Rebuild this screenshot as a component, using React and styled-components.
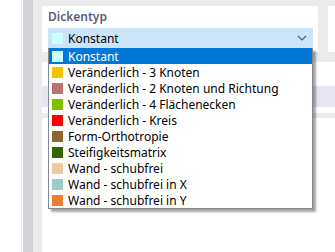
import React from 'react';
import styled, { createGlobalStyle } from 'styled-components';

const GlobalStyle = createGlobalStyle`
  html, body {
    margin: 0;
    padding: 0;
    background: #ffffff;
    font-family: "Noto Sans", "Open Sans", sans-serif;
  }
`;

const items = [
  { label: 'Konstant', color: '#ccffff' },
  { label: 'Veränderlich - 3 Knoten', color: '#f5c400' },
  { label: 'Veränderlich - 2 Knoten und Richtung', color: '#b97373' },
  { label: 'Veränderlich - 4 Flächenecken', color: '#7fbf00' },
  { label: 'Veränderlich - Kreis', color: '#ff0000' },
  { label: 'Form-Orthotropie', color: '#8f6630' },
  { label: 'Steifigkeitsmatrix', color: '#336600' },
  { label: 'Wand - schubfrei', color: '#efc8a2' },
  { label: 'Wand - schubfrei in X', color: '#99cccc' },
  { label: 'Wand - schubfrei in Y', color: '#ed7d31' },
];

const Page = styled.div`
  display: flex;
  width: 335px;
  height: 252px;
  overflow: hidden;
`;

const LeftWhite = styled.div`
  width: 21px;
  flex-shrink: 0;
  border-right: 1px solid #e4e4e4;
`;

const Rail = styled.div`
  width: 10px;
  flex-shrink: 0;
  margin-left: 1px;
  background: #d1d1d6;
`;

const Gutter = styled.div`
  width: 9px;
  flex-shrink: 0;
  background: #ebebeb;
`;

const Main = styled.div`
  flex: 1;
  display: flex;
  flex-direction: column;
`;

const TopRow = styled.div`
  display: flex;
  background: #ebebeb;
  padding-top: 6px;
  height: 46px;
`;

const Panel = styled.div`
  position: relative;
  width: 276px;
  background: #ffffff;
  padding: 3px 5px 0 6px;
  box-sizing: border-box;
`;

const SideGap = styled.div`
  width: 10px;
`;

const SideWhite = styled.div`
  flex: 1;
  background: #ffffff;
`;

const Band = styled.div`
  height: ${(p) => p.h}px;
  background: ${(p) => p.bg};
`;

const Label = styled.div`
  font-size: 12px;
  font-weight: 600;
  color: #5c5c7a;
  height: 16px;
  line-height: 16px;
  margin-bottom: 3px;
`;

const Combo = styled.div`
  display: flex;
  align-items: center;
  height: 20px;
  background: #cce4f7;
  padding: 0 6px 0 4px;
  font-size: 12px;
  color: #000;
`;

const Swatch = styled.span`
  width: 11px;
  height: 11px;
  flex-shrink: 0;
  background: ${(p) => p.color};
  margin-right: 5px;
`;

const ComboText = styled.span`
  flex: 1;
`;

const List = styled.div`
  position: absolute;
  left: 6px;
  top: 42px;
  width: 265px;
  box-sizing: border-box;
  background: #ffffff;
  border: 1px solid #828790;
  border-top: none;
  box-shadow: 3px 3px 2px rgba(0, 0, 0, 0.35);
  z-index: 2;
`;

const Item = styled.div`
  display: flex;
  align-items: center;
  height: 16px;
  padding-left: 3px;
  font-size: 12px;
  white-space: nowrap;
  color: ${(p) => (p.active ? '#ffffff' : '#000000')};
  background: ${(p) => (p.active ? '#0078d7' : 'transparent')};
`;

const Chevron = () => (
  <svg width="10" height="6" viewBox="0 0 10 6">
    <path d="M1 1 L5 5 L9 1" fill="none" stroke="#555" strokeWidth="1.1" />
  </svg>
);

export default function App() {
  return (
    <>
      <GlobalStyle />
      <Page>
        <LeftWhite />
        <Rail />
        <Gutter />
        <Main>
          <TopRow>
            <Panel>
              <Label>Dickentyp</Label>
              <Combo>
                <Swatch color={items[0].color} />
                <ComboText>Konstant</ComboText>
                <Chevron />
              </Combo>
              <List>
                {items.map((it, i) => (
                  <Item key={it.label} active={i === 0}>
                    <Swatch color={it.color} />
                    {it.label}
                  </Item>
                ))}
              </List>
            </Panel>
            <SideGap />
            <SideWhite />
          </TopRow>
          <Band h={10} bg="#ebebeb" />
          <Band h={24} bg="#ffffff" />
          <Band h={21} bg="#e6e6f0" />
          <Band h={6} bg="#ffffff" />
          <Band h={5} bg="#ebebeb" />
        </Main>
      </Page>
    </>
  );
}
